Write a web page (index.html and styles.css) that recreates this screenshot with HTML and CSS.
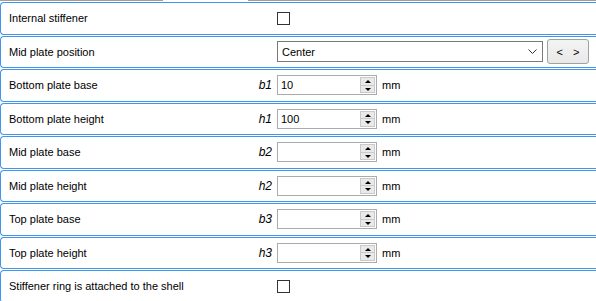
FILE: index.html
```html
<!DOCTYPE html>
<html>
<head>
<meta charset="utf-8">
<link rel="stylesheet" href="styles.css">
</head>
<body>
<div class="tabline"><span class="seg seg-a"></span><span class="seg seg-b"></span></div>
<div class="rows">
  <div class="row">
    <div class="cap"><span class="label">Internal stiffener</span></div>
    <div class="ctl"><span class="check"></span></div>
  </div>
  <div class="row">
    <div class="cap"><span class="label">Mid plate position</span></div>
    <div class="ctl">
      <div class="combo"><span class="combo-text">Center</span>
        <svg class="chev" width="9" height="5" viewBox="0 0 9 5"><path d="M0.5 0.5 L4.5 4.5 L8.5 0.5" fill="none" stroke="#333" stroke-width="1"/></svg>
      </div>
      <div class="navbtn"><span>&lt;</span><span>&gt;</span></div>
    </div>
  </div>
  <div class="row">
    <div class="cap"><span class="label">Bottom plate base</span><span class="sym">b1</span></div>
    <div class="ctl"><div class="num"><span class="val">10</span><span class="spin"><span class="up"></span><span class="dn"></span></span></div><span class="unit">mm</span></div>
  </div>
  <div class="row">
    <div class="cap"><span class="label">Bottom plate height</span><span class="sym">h1</span></div>
    <div class="ctl"><div class="num"><span class="val">100</span><span class="spin"><span class="up"></span><span class="dn"></span></span></div><span class="unit">mm</span></div>
  </div>
  <div class="row">
    <div class="cap"><span class="label">Mid plate base</span><span class="sym">b2</span></div>
    <div class="ctl"><div class="num"><span class="val"></span><span class="spin"><span class="up"></span><span class="dn"></span></span></div><span class="unit">mm</span></div>
  </div>
  <div class="row">
    <div class="cap"><span class="label">Mid plate height</span><span class="sym">h2</span></div>
    <div class="ctl"><div class="num"><span class="val"></span><span class="spin"><span class="up"></span><span class="dn"></span></span></div><span class="unit">mm</span></div>
  </div>
  <div class="row">
    <div class="cap"><span class="label">Top plate base</span><span class="sym">b3</span></div>
    <div class="ctl"><div class="num"><span class="val"></span><span class="spin"><span class="up"></span><span class="dn"></span></span></div><span class="unit">mm</span></div>
  </div>
  <div class="row">
    <div class="cap"><span class="label">Top plate height</span><span class="sym">h3</span></div>
    <div class="ctl"><div class="num"><span class="val"></span><span class="spin"><span class="up"></span><span class="dn"></span></span></div><span class="unit">mm</span></div>
  </div>
  <div class="row">
    <div class="cap"><span class="label">Stiffener ring is attached to the shell</span></div>
    <div class="ctl"><span class="check"></span></div>
  </div>
</div>
</body>
</html>
```
FILE: styles.css
```css
html, body {
  margin: 0;
  padding: 0;
  background: #ffffff;
  overflow: hidden;
}
body {
  font-family: "Liberation Sans", Arial, sans-serif;
  font-size: 11px;
  color: #000;
}
.tabline {
  display: flex;
  height: 1px;
  margin-bottom: 1px;
}
.seg {
  display: block;
  height: 1px;
  background: #a0a0a0;
}
.seg-a { width: 163px; }
.seg-b { flex: 1; margin-left: 85px; }
.rows {
  display: flex;
  flex-direction: column;
  gap: 1px;
}
.row {
  display: flex;
  align-items: center;
  box-sizing: border-box;
  height: 32.5px;
  border: 1px solid #3f97ea;
  border-right: none;
  border-radius: 4px 0 0 4px;
}
.cap {
  display: flex;
  align-items: center;
  box-sizing: border-box;
  width: 276px;
  padding: 0 5px 0 8px;
}
.label {
  flex: 1;
  white-space: nowrap;
}
.sym {
  font-style: italic;
  font-size: 12px;
}
.ctl {
  display: flex;
  align-items: center;
}
.check {
  display: block;
  box-sizing: border-box;
  width: 13px;
  height: 13px;
  border: 1px solid #333;
  background: #fff;
}
.combo {
  display: flex;
  align-items: center;
  box-sizing: border-box;
  width: 266px;
  height: 21px;
  border: 1px solid #7a7a7a;
  padding: 0 4px 0 4px;
}
.combo-text { flex: 1; }
.chev { display: block; margin-right: 1px; }
.navbtn {
  display: flex;
  align-items: center;
  justify-content: center;
  gap: 10px;
  box-sizing: border-box;
  width: 42px;
  height: 25px;
  margin-left: 4px;
  border: 1px solid #a0a0a0;
  border-radius: 3px;
  background: linear-gradient(#f4f4f4, #e8e8e8);
  font-size: 11px;
}
.num {
  display: flex;
  align-items: center;
  box-sizing: border-box;
  width: 100px;
  height: 20px;
  border: 1px solid #ababab;
  padding: 1px 1px 1px 3px;
}
.val { flex: 1; }
.spin {
  display: flex;
  flex-direction: column;
  box-sizing: border-box;
  width: 15px;
  height: 16px;
  background: #e9e9e9;
  border: 1px solid #c9c9c9;
}
.up, .dn {
  flex: 1;
  display: flex;
  align-items: center;
  justify-content: center;
}
.up { border-bottom: 1px solid #c9c9c9; }
.up::after {
  content: "";
  border-left: 3px solid transparent;
  border-right: 3px solid transparent;
  border-bottom: 3px solid #000;
}
.dn::after {
  content: "";
  border-left: 3px solid transparent;
  border-right: 3px solid transparent;
  border-top: 3px solid #000;
}
.unit { margin-left: 5px; }
```
